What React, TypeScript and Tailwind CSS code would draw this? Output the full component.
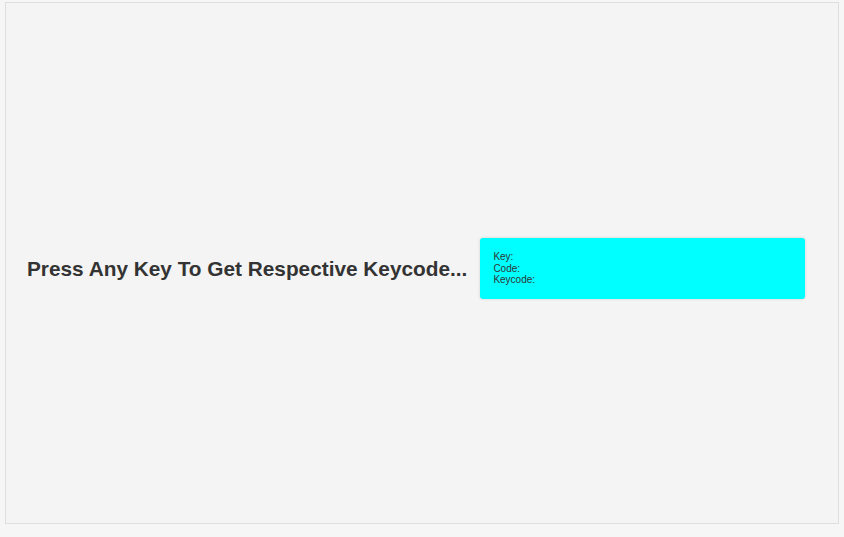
import React from 'react';

const App = () => {
  return (
    <div className="w-[844px] h-[537px] bg-[#f6f6f6] pt-[2px] pl-[5px]" style={{ fontFamily: '"Liberation Sans", Arial, sans-serif' }}>
      <div className="w-[834px] h-[522px] border border-[#dedede] bg-[#f4f4f4] flex items-center pl-[21px] pt-[11px]">
        <h1 className="text-[20.8px] font-bold text-[#333]">Press Any Key To Get Respective Keycode...</h1>
        <div className="ml-[13px] w-[325px] h-[61px] bg-[#00ffff] rounded-[3px] shadow-[0_0_3px_rgba(0,0,0,0.15)] pl-[13px] pt-[13px] text-[10px] leading-[11.5px] text-[#333]">
          <div>Key:</div>
          <div>Code:</div>
          <div>Keycode:</div>
        </div>
      </div>
    </div>
  );
};

export default App;
